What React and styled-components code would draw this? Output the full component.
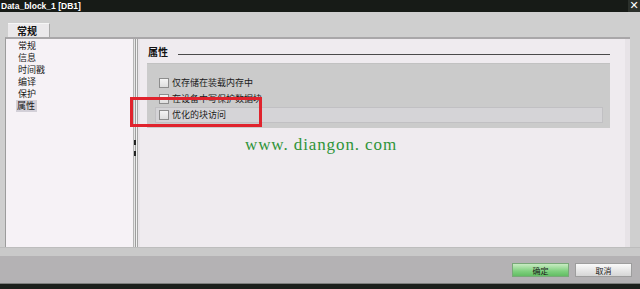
import React from "react";
import styled, { createGlobalStyle } from "styled-components";

const Global = createGlobalStyle`
  html, body { margin: 0; padding: 0; background: #cdcdcd; }
  body { font-family: "Noto Sans CJK SC", "Noto Sans", sans-serif; }
`;

const Window = styled.div`
  position: relative;
  width: 640px;
  height: 289px;
  display: flex;
  flex-direction: column;
  background: #cfcfcf;
  overflow: hidden;
`;

const TitleBar = styled.div`
  height: 12px;
  flex: none;
  background: #171b17;
  display: flex;
  align-items: center;
  justify-content: space-between;
`;

const Title = styled.span`
  color: #ffffff;
  font-family: "Liberation Sans", Arial, sans-serif;
  font-weight: bold;
  font-size: 8.5px;
  line-height: 12px;
  padding-left: 1px;
`;

const CloseBtn = styled.span`
  width: 12px;
  height: 12px;
  background: #2b302b;
  color: #ffffff;
  display: flex;
  align-items: center;
  justify-content: center;
  font-family: "DejaVu Sans", sans-serif;
  font-weight: bold;
  font-size: 11px;
  line-height: 12px;
`;

const Body = styled.div`
  height: 235px;
  flex: none;
  display: flex;
  flex-direction: column;
  padding: 0 10px 0 5px;
`;

const TabRow = styled.div`
  height: 25px;
  flex: none;
  display: flex;
  align-items: flex-end;
  padding-left: 3px;
`;

const Tab = styled.div`
  width: 42px;
  height: 14px;
  background: #ebe9eb;
  border-right: 1px solid #a9a9a9;
  border-top: 1px solid #f6f6f6;
  font-size: 10px;
  font-weight: bold;
  color: #111;
  line-height: 14px;
  padding-left: 9px;
  box-sizing: border-box;
`;

const Content = styled.div`
  height: 210px;
  display: flex;
  border-top: 2px solid #a9a7a9;
  border-left: 1px solid #9c9c9c;
  box-sizing: border-box;
`;

const Nav = styled.div`
  width: 127px;
  background: #f6f2f6;
  padding: 1px 0 0 11px;
  box-sizing: border-box;
  display: flex;
  flex-direction: column;
`;

const NavItem = styled.div`
  height: 12px;
  font-size: 9px;
  line-height: 12px;
  color: #1a1a1a;
  align-self: flex-start;
  padding: 0 2px 0 1px;
  margin-left: ${(p) => (p.$sel ? "-1px" : "0")};
  background: ${(p) => (p.$sel ? "#d3d0d8" : "transparent")};
`;

const Splitter = styled.div`
  position: relative;
  width: 7px;
  flex: none;
  background: linear-gradient(
    to right,
    #b5b5b5 0 1px,
    #e6e6e6 1px 2px,
    #9d9d9d 2px 3px,
    #f1f1f1 3px 4px,
    #a5a5a5 4px 5px,
    #e9e5e9 5px 7px
  );
`;

const SplitMark = styled.span`
  position: absolute;
  left: 1px;
  top: ${(p) => p.$top}px;
  width: 2px;
  height: 5px;
  background: #222;
`;

const Main = styled.div`
  flex: 1;
  background: #efebef;
  padding: 5px 15px 0 7px;
  display: flex;
  flex-direction: column;
  border-right: 5px solid #e7e3e7;
`;

const HeadingRow = styled.div`
  display: flex;
  align-items: center;
  gap: 10px;
  height: 16px;
  padding-left: 1px;
`;

const Heading = styled.span`
  font-size: 10px;
  font-weight: bold;
  color: #111;
  line-height: 16px;
`;

const HeadLine = styled.div`
  flex: 1;
  height: 1px;
  background: #4a4a4a;
  margin-top: 5px;
`;

const Group = styled.div`
  margin-top: 3px;
  background: #cbcbcb;
  border-top: 1px solid #c2c2c2;
  padding: 11px 7px 5px 8px;
  height: 65px;
  box-sizing: border-box;
  display: flex;
  flex-direction: column;
`;

const Row = styled.div`
  height: 16px;
  display: flex;
  align-items: center;
  gap: 3px;
  padding-left: 3px;
  box-sizing: border-box;
  background: ${(p) => (p.$focus ? "#d5d4d7" : "transparent")};
  border: 1px solid ${(p) => (p.$focus ? "#c1c0c3" : "transparent")};
`;

const Box = styled.span`
  width: 8px;
  height: 8px;
  flex: none;
  border: 1px solid #8d8d8d;
  background: linear-gradient(#f4f4f4, #dedede);
`;

const Label = styled.span`
  font-size: 9px;
  line-height: 12px;
  color: #1a1a1a;
`;

const Footer = styled.div`
  flex: 1;
  display: flex;
  flex-direction: column;
`;

const FooterStrip = styled.div`
  height: 9px;
  background: #c9c9c9;
  border-top: 1px solid #bdbdbd;
  box-sizing: border-box;
`;

const ButtonBar = styled.div`
  height: 27px;
  background: #b4b2b4;
  display: flex;
  justify-content: flex-end;
  align-items: flex-start;
  gap: 6px;
  padding: 7px 8px 0 0;
  box-sizing: border-box;
`;

const Button = styled.div`
  width: 57px;
  height: 14px;
  box-sizing: border-box;
  display: flex;
  align-items: center;
  justify-content: center;
  font-size: 8px;
  color: #1a1a1a;
  border: 1px solid ${(p) => (p.$primary ? "#79a879" : "#9d9d9d")};
  background: ${(p) =>
    p.$primary
      ? "linear-gradient(#c8ecc2, #7fd07e 60%, #62bd63)"
      : "linear-gradient(#fafafa, #e4e4e4 60%, #d6d6d6)"};
`;

const BottomEdge = styled.div`
  height: 6px;
  background: #1c201c;
  border-top: 1px solid #7d7f7d;
  box-sizing: border-box;
`;

const Highlight = styled.div`
  position: absolute;
  left: 130px;
  top: 97px;
  width: 132px;
  height: 30px;
  box-sizing: border-box;
  border: 3px solid #e0232d;
`;

const Watermark = styled.div`
  position: absolute;
  left: 245px;
  top: 135px;
  font-family: "Liberation Serif", "DejaVu Serif", serif;
  font-size: 17px;
  letter-spacing: 0.9px;
  color: #2e9438;
  white-space: pre;
`;

const navItems = ["常规", "信息", "时间戳", "编译", "保护", "属性"];

export default function App() {
  return (
    <>
      <Global />
      <Window>
        <TitleBar>
          <Title>Data_block_1 [DB1]</Title>
          <CloseBtn>✕</CloseBtn>
        </TitleBar>
        <Body>
          <TabRow>
            <Tab>常规</Tab>
          </TabRow>
          <Content>
            <Nav>
              {navItems.map((n) => (
                <NavItem key={n} $sel={n === "属性"}>
                  {n}
                </NavItem>
              ))}
            </Nav>
            <Splitter>
              <SplitMark $top={101} />
              <SplitMark $top={112} />
            </Splitter>
            <Main>
              <HeadingRow>
                <Heading>属性</Heading>
                <HeadLine />
              </HeadingRow>
              <Group>
                <Row>
                  <Box />
                  <Label>仅存储在装载内存中</Label>
                </Row>
                <Row>
                  <Box />
                  <Label>在设备中写保护数据块</Label>
                </Row>
                <Row $focus>
                  <Box />
                  <Label>优化的块访问</Label>
                </Row>
              </Group>
            </Main>
          </Content>
        </Body>
        <Footer>
          <FooterStrip />
          <ButtonBar>
            <Button $primary>确定</Button>
            <Button>取消</Button>
          </ButtonBar>
          <BottomEdge />
        </Footer>
        <Highlight />
        <Watermark>www. diangon. com</Watermark>
      </Window>
    </>
  );
}
